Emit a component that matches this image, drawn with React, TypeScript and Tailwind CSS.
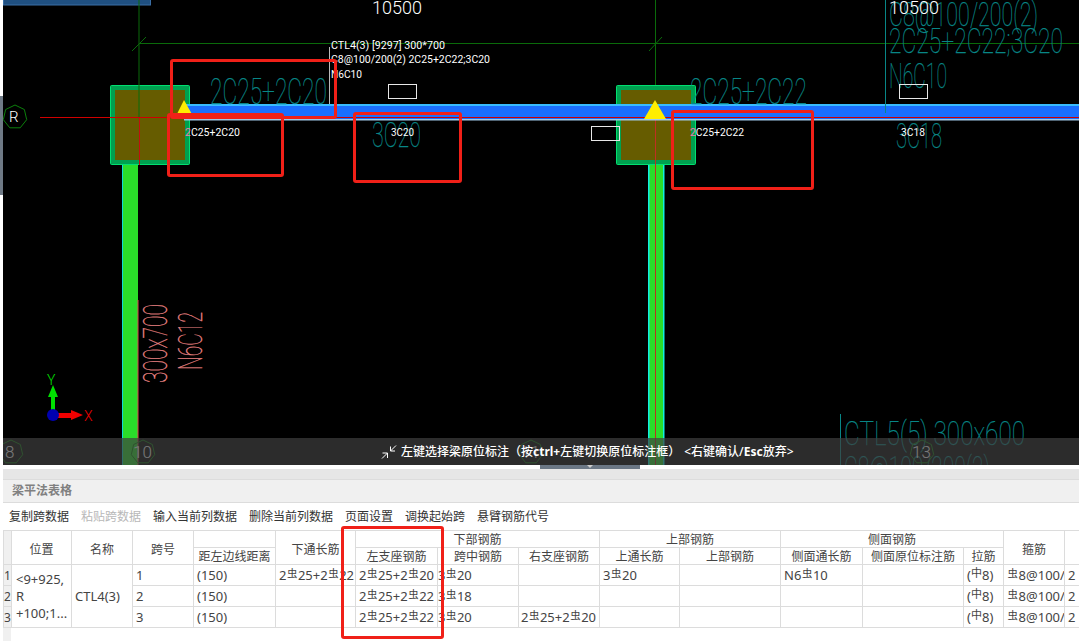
const uiFont = "font-['Noto_Sans','Noto_Sans_CJK_SC',sans-serif]";

function CadText({ x, y, w, size, text, fill = "#088686" }: { x: number; y: number; w: number; size: number; text: string; fill?: string }) {
  return (
    <text x={x} y={y} fontSize={size} fill={fill} stroke={fill} strokeWidth={0.25} fontWeight={100} fontFamily="Roboto, sans-serif" textLength={w} lengthAdjust="spacingAndGlyphs">
      {text}
    </text>
  );
}

function SmallText({ x, y, text, w, lead }: { x: number; y: number; text: string; w: number; lead?: string }) {
  return (
    <text x={x} y={y} fontSize={10.5} fill="#fff" fontFamily="Roboto, sans-serif" textLength={w} lengthAdjust="spacingAndGlyphs">
      {lead && <tspan fill="#f078b0">{lead}</tspan>}
      {text}
    </text>
  );
}

function ConcreteColumn({ x }: { x: number }) {
  return (
    <g>
      <rect x={x + 0.5} y={85.5} width={79} height={79} rx={1} fill="#00a050" stroke="#00e070" />
      <rect x={x + 5} y={90} width={70} height={70} fill="#665c00" />
    </g>
  );
}

function Heptagon({ cx, cy, r, color = "#0c800c" }: { cx: number; cy: number; r: number; color?: string }) {
  const pts = Array.from({ length: 7 }, (_, i) => {
    const a = (i / 7) * Math.PI * 2 - Math.PI / 2;
    return `${cx + r * Math.cos(a)},${cy + r * Math.sin(a)}`;
  }).join(" ");
  return <polygon points={pts} fill="none" stroke={color} />;
}

function CadDrawing() {
  return (
    <svg className="block" width={1076} height={465} viewBox="3 0 1076 465">
      <rect x={3} y={0} width={1076} height={465} fill="#000" />
      <rect x={3.5} y={-2} width={147} height={7} fill="#1f4f80" stroke="#3a6ea5" />

      {/* axis lines */}
      <line x1={139} y1={0} x2={139} y2={160} stroke="#0a6a0a" />
      <line x1={655.5} y1={0} x2={655.5} y2={160} stroke="#0a6a0a" />
      <line x1={139} y1={43.5} x2={1079} y2={43.5} stroke="#0a6a0a" />
      <line x1={132} y1={51} x2={146} y2={37} stroke="#0a6a0a" />
      <line x1={649} y1={51} x2={662} y2={37} stroke="#0a6a0a" />

      {/* side columns */}
      <rect x={122} y={159} width={16} height={306} fill="#2add2a" />
      <rect x={122} y={159} width={1} height={306} fill="#10d8d8" />
      <rect x={137.5} y={300} width={1} height={165} fill="#e04050" />
      <rect x={648} y={159} width={16} height={306} fill="#2add2a" />
      <rect x={648} y={159} width={1.5} height={306} fill="#10f0e0" />
      <rect x={663} y={159} width={1.5} height={306} fill="#10f0e0" />

      <ConcreteColumn x={110} />
      <ConcreteColumn x={616} />
      <line x1={139} y1={85} x2={139} y2={117} stroke="#0a6a0a" />
      <line x1={139.5} y1={117} x2={139.5} y2={165} stroke="#c01010" />
      <line x1={655.5} y1={117} x2={655.5} y2={465} stroke="#c03020" />

      {/* beam */}
      <rect x={184} y={104} width={895} height={16} fill="#1a6fff" />
      <rect x={184} y={104} width={895} height={2} fill="#38bcff" />
      <rect x={184} y={119} width={895} height={1.5} fill="#9fc8e8" />
      <line x1={40} y1={117.5} x2={1079} y2={117.5} stroke="#d00000" />

      <path d="M184 100L193 116H176Z" fill="#ffee00" />
      <rect x={175} y={115} width={19} height={2} fill="#f0a020" />
      <path d="M655 100L666 119H644Z" fill="#ffee00" />

      <Heptagon cx={15} cy={117} r={12} />
      <text x={9} y={122} fontSize={15} fill="#fff" fontFamily="Roboto, sans-serif" fontWeight={300}>R</text>

      {/* labels on the beam */}
      <text x={372} y={14} fontSize={18} fill="#fff" fontFamily="Roboto, sans-serif" fontWeight={300}>10500</text>
      <line x1={329.5} y1={47} x2={329.5} y2={104} stroke="#bbb" />
      <SmallText x={331} y={49} w={114} text="CTL4(3) [9297] 300*700" />
      <SmallText x={331} y={63} w={159} text="C8@100/200(2) 2C25+2C22;3C20" />
      <SmallText x={331} y={78} w={31} text="N6C10" />

      <CadText x={210} y={104} w={117} size={36} text="2C25+2C20" />
      <CadText x={372} y={147} w={49} size={35} text="3C20" />
      <CadText x={690} y={104} w={117} size={36} text="2C25+2C22" />
      <CadText x={896} y={148} w={46} size={35} text="3C18" />
      <CadText x={889} y={88} w={58} size={35} text="N6C10" />
      <CadText x={889} y={26} w={149} size={33} text="C8@100/200(2)" />
      <CadText x={889} y={53} w={174} size={35} text="2C25+2C22;3C20" />
      <line x1={885.5} y1={0} x2={885.5} y2={113} stroke="#088686" />
      <text x={889} y={14} fontSize={18} fill="#fff" fontFamily="Roboto, sans-serif" fontWeight={300}>10500</text>

      <rect x={388.5} y={84.5} width={28} height={14} fill="none" stroke="#e8e8e8" />
      <rect x={899.5} y={84.5} width={28} height={14} fill="none" stroke="#e8e8e8" />
      <rect x={591.5} y={126.5} width={28} height={14} fill="none" stroke="#e8e8e8" />

      <SmallText x={185} y={136} w={55} lead="2" text="C25+2C20" />
      <SmallText x={391} y={136} w={23} text="3C20" />
      <SmallText x={690} y={136} w={54} lead="2" text="C25+2C22" />
      <SmallText x={901} y={136} w={24} text="3C18" />

      {/* labels on the left column */}
      <g fill="#f08888" stroke="#f08888" strokeWidth={0.3} fontFamily="Roboto, sans-serif" fontWeight={100}>
        <text transform="translate(167 383) rotate(-90)" fontSize={34} textLength={79} lengthAdjust="spacingAndGlyphs">300x700</text>
        <text transform="translate(202 370) rotate(-90)" fontSize={34} textLength={58} lengthAdjust="spacingAndGlyphs">N6C12</text>
      </g>

      {/* coordinate marker */}
      <rect x={51} y={392} width={4} height={22} fill="#00e000" />
      <path d="M53 385L58 397H48Z" fill="#00e000" />
      <rect x={53} y={413} width={20} height={5} fill="#f00000" />
      <path d="M83 415L71 410V420Z" fill="#f00000" />
      <circle cx={53} cy={415} r={6} fill="#0000b0" />
      <text x={47} y={385} fontSize={14} fill="#00e000" fontFamily="Roboto, sans-serif" fontWeight={300}>Y</text>
      <text x={84} y={421} fontSize={14} fill="#f00000" fontFamily="Roboto, sans-serif" fontWeight={300}>X</text>

      {/* lower drawing, runs under the hint bar */}
      <line x1={840.5} y1={414} x2={840.5} y2={465} stroke="#088686" />
      <CadText x={844} y={445} w={181} size={34} text="CTL5(5) 300x600" />
      <CadText x={844} y={480} w={146} size={33} text="C8@100/200(2)" />
      <g fontFamily="Roboto, sans-serif" fontWeight={300} fill="#fff" fontSize={17}>
        <text x={5} y={458}>8</text>
        <text x={133} y={458}>10</text>
        <text x={521} y={458}>11</text>
        <text x={912} y={458}>13</text>
      </g>
      <Heptagon cx={11} cy={452} r={12} />
      <Heptagon cx={143} cy={452} r={12} />
      <Heptagon cx={531} cy={452} r={12} />
      <Heptagon cx={922} cy={452} r={12} />
    </svg>
  );
}

function Rebar() {
  return <span className="relative -top-[3px] mx-[0.5px] text-[10.5px] font-['Noto_Sans_CJK_SC',sans-serif]">虫</span>;
}

function Bars({ a, b }: { a: string; b: string }) {
  return (
    <>
      2<Rebar />{a}+2<Rebar />{b}
    </>
  );
}

const th = "border border-[#dcdcdc] text-center font-normal p-0 pt-[2px] text-[12px] leading-none text-[#444] whitespace-nowrap overflow-hidden";
const thTall = "border border-[#dcdcdc] text-center font-normal p-0 pt-[4px] text-[12px] leading-none text-[#444] whitespace-nowrap overflow-hidden";
const td = "border border-[#dcdcdc] px-[3px] py-0 pt-[1px] text-[13px] leading-none text-[#444] whitespace-nowrap overflow-hidden";
const rowNo = "border border-[#dcdcdc] bg-[#f0f0f0] p-0 pt-[1px] text-[12px] leading-none text-[#444] text-center";

const spans = [
  {
    no: "1", span: "1",
    lower: <Bars a="25" b="22" />, left: <Bars a="25" b="20" />,
    mid: <>3<Rebar />20</>, right: null, upper: <>3<Rebar />20</>, side: <>N6<Rebar />10</>,
  },
  { no: "2", span: "2", lower: null, left: <Bars a="25" b="22" />, mid: <>3<Rebar />18</>, right: null, upper: null, side: null },
  { no: "3", span: "3", lower: null, left: <Bars a="25" b="22" />, mid: <>3<Rebar />20</>, right: <Bars a="25" b="20" />, upper: null, side: null },
];

const widths = [8, 60, 61, 61, 82, 80, 82, 81, 81, 80, 101, 82, 101, 40, 61, 15];

function BeamTable() {
  return (
    <table className="w-[1076px] table-fixed border-collapse">
      <colgroup>
        {widths.map((w, i) => (
          <col key={i} style={{ width: w }} />
        ))}
      </colgroup>
      <thead>
        <tr className="h-[17px]">
          <th rowSpan={2} className={`${th} bg-[#f0f0f0]`}></th>
          <th rowSpan={2} className={thTall}>位置</th>
          <th rowSpan={2} className={thTall}>名称</th>
          <th rowSpan={2} className={thTall}>跨号</th>
          <th className={th}></th>
          <th rowSpan={2} className={thTall}>下通长筋</th>
          <th colSpan={3} className={th}>下部钢筋</th>
          <th colSpan={2} className={th}>上部钢筋</th>
          <th colSpan={3} className={th}>侧面钢筋</th>
          <th rowSpan={2} className={thTall}>箍筋</th>
          <th rowSpan={2} className={th}></th>
        </tr>
        <tr className="h-[17px]">
          <th className={th}>距左边线距离</th>
          <th className={th}>左支座钢筋</th>
          <th className={th}>跨中钢筋</th>
          <th className={th}>右支座钢筋</th>
          <th className={th}>上通长筋</th>
          <th className={th}>上部钢筋</th>
          <th className={th}>侧面通长筋</th>
          <th className={th}>侧面原位标注筋</th>
          <th className={th}>拉筋</th>
        </tr>
      </thead>
      <tbody>
        {spans.map((row, i) => (
          <tr key={row.no} className="h-[21px]">
            <td className={rowNo}>{row.no}</td>
            {i === 0 && (
              <>
                <td rowSpan={3} className="border border-[#dcdcdc] pl-[4px] text-[13px] leading-[17px] text-[#444] whitespace-pre overflow-hidden">
                  {"<9+925,\nR\n+100;1..."}
                </td>
                <td rowSpan={3} className={td}>CTL4(3)</td>
              </>
            )}
            <td className={td}>{row.span}</td>
            <td className={td}>(150)</td>
            <td className={td}>{row.lower}</td>
            <td className={td}>{row.left}</td>
            <td className={`${td} pl-0`}>{row.mid}</td>
            <td className={`${td} pl-[2px]`}>{row.right}</td>
            <td className={td}>{row.upper}</td>
            <td className={td}></td>
            <td className={td}>{row.side}</td>
            <td className={td}></td>
            <td className={td}>(<span className="relative -top-[3px] text-[11px]">中</span>8)</td>
            <td className={td}><Rebar />8@100/</td>
            <td className={td}>2</td>
          </tr>
        ))}
      </tbody>
    </table>
  );
}

const tools = ["复制跨数据", "粘贴跨数据", "输入当前列数据", "删除当前列数据", "页面设置", "调换起始跨", "悬臂钢筋代号"];

export default function App() {
  return (
    <div className={`relative flex h-[641px] w-[1079px] flex-col overflow-hidden bg-white ${uiFont}`}>
      <div className="flex h-[465px] shrink-0">
        <div className="w-[3px] shrink-0 pt-[96px]">
          <div className="h-[99px] bg-[#6f7a86]"></div>
        </div>
        <div className="relative flex-1">
          <CadDrawing />
          <div className="absolute inset-x-0 bottom-0 flex h-[27px] items-center bg-[#3e3e3e]/70 pl-[378px] text-[12px] font-medium text-white">
            <svg className="mr-[4px]" width={16} height={14} viewBox="0 0 16 14" fill="none" stroke="#fff" strokeWidth={1}>
              <path d="M15 0.5L9.5 6M9.5 1.5V6H14" />
              <path d="M1 13.5L6.5 8M1.5 8H6.5V13" />
            </svg>
            <span>左键选择梁原位标注（按<b>ctrl+</b>左键切换原位标注框）</span>
            <span className="ml-[4px]">&lt;右键确认/<b>Esc</b>放弃&gt;</span>
          </div>
        </div>
      </div>

      <div className="flex h-[4px] shrink-0 pl-[540px]">
        <div className="flex h-[4px] w-[100px] justify-center bg-[#6b7785]">
          <div className="h-0 w-0 border-x-[3px] border-t-[3px] border-x-transparent border-t-[#ccc]"></div>
        </div>
      </div>

      <div className="ml-[3px] flex min-h-0 flex-1 flex-col">
        <div className="h-[11px] shrink-0 border-b border-[#dcdcdc] bg-[#e6e6e6]"></div>
        <div className="flex h-[23px] shrink-0 items-center border-b border-[#dcdcdc] bg-[#f0f0f0] pl-[9px] text-[12px] font-bold text-[#808080]">
          梁平法表格
        </div>
        <div className="flex h-[27px] shrink-0 items-center gap-[12px] pl-[6px] text-[12px] text-[#333]">
          {tools.map((t, i) => (
            <span key={t} className={i === 1 ? "text-[#b8b8b8]" : ""}>{t}</span>
          ))}
        </div>
        <BeamTable />
        <div className="w-[8px] flex-1 bg-[#f0f0f0]"></div>
      </div>

      {/* hand-drawn red review marks */}
      <div className="absolute left-[170px] top-[59px] h-[60px] w-[167px] rounded-[3px] border-[3px] border-[#f02018]"></div>
      <div className="absolute left-[167px] top-[113px] h-[64px] w-[117px] rounded-[3px] border-[3px] border-[#f02018]"></div>
      <div className="absolute left-[353px] top-[112px] h-[71px] w-[109px] rounded-[3px] border-[3px] border-[#f02018]"></div>
      <div className="absolute left-[671px] top-[110px] h-[80px] w-[143px] rounded-[3px] border-[3px] border-[#f02018]"></div>
      <div className="absolute left-[341px] top-[526px] h-[113px] w-[103px] rounded-[3px] border-[3px] border-[#f02018]"></div>
    </div>
  );
}
